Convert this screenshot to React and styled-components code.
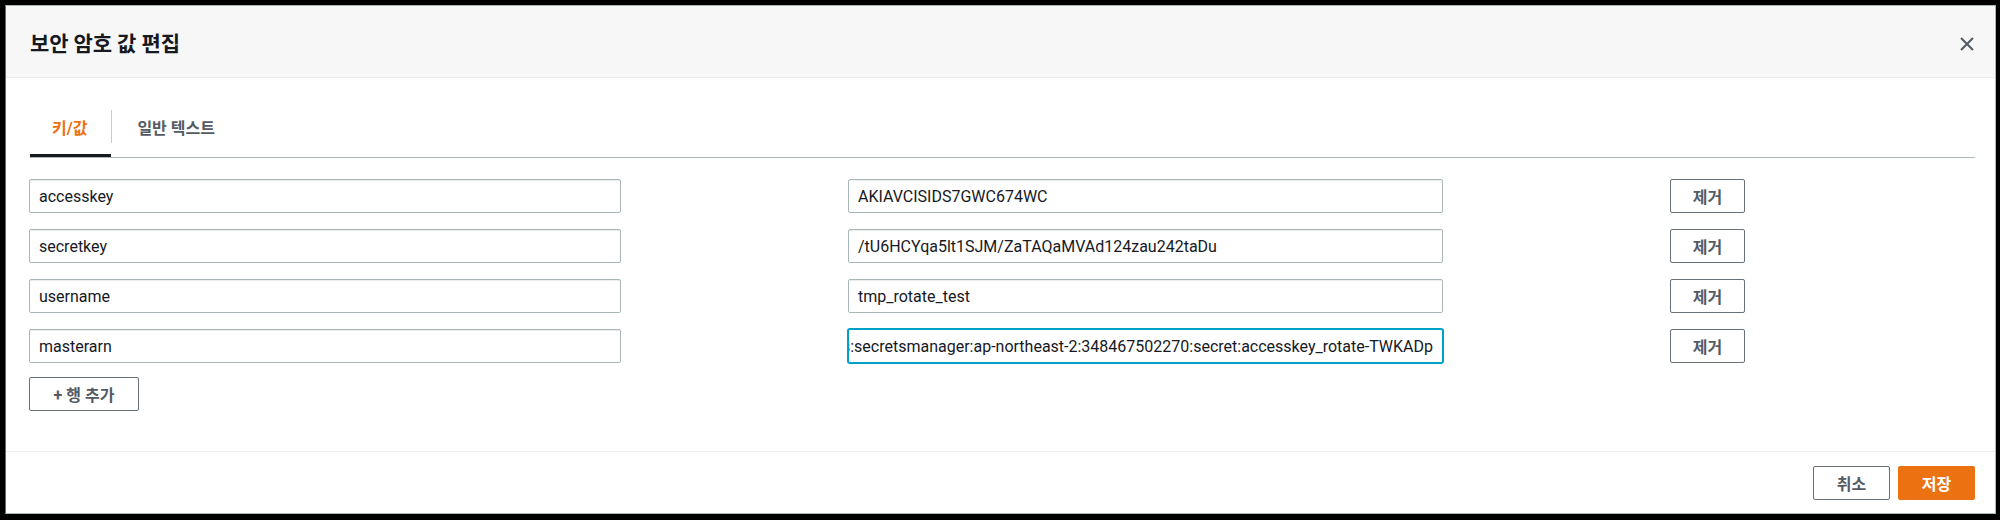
import React from "react";
import styled, { createGlobalStyle } from "styled-components";

const GlobalStyle = createGlobalStyle`
	html, body {
		margin: 0;
		padding: 0;
		background: #000;
	}
	body {
		font-family: Roboto, "Noto Sans CJK KR", sans-serif;
		color: #16191f;
	}
	* {
		box-sizing: border-box;
	}
`;

const rows = [
	{ key: "accesskey", value: "AKIAVCISIDS7GWC674WC" },
	{ key: "secretkey", value: "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" },
	{ key: "username", value: "tmp_rotate_test" },
	{
		key: "masterarn",
		value: "arn:aws:secretsmanager:ap-northeast-2:348467502270:secret:accesskey_rotate-TWKADp",
		focused: true,
	},
];

const CloseIcon = () => (
	<svg width="16" height="16" viewBox="0 0 16 16">
		<path d="M2 2 L14 14 M14 2 L2 14" stroke="#545b64" strokeWidth="2" fill="none" />
	</svg>
);

const App = () => {
	return (
		<Page>
			<GlobalStyle />
			<Modal>
				<Header>
					<Title>보안 암호 값 편집</Title>
					<CloseButton aria-label="닫기">
						<CloseIcon />
					</CloseButton>
				</Header>
				<Body>
					<TabList>
						<Tab active>키/값</Tab>
						<TabDivider />
						<Tab>일반 텍스트</Tab>
					</TabList>
					<Rows>
						{rows.map((row) => (
							<Row key={row.key}>
								<Field>
									<FieldText>{row.key}</FieldText>
								</Field>
								<Field focused={row.focused}>
									<FieldText>{row.value}</FieldText>
								</Field>
								<Button width="75px">제거</Button>
							</Row>
						))}
					</Rows>
					<AddRow>
						<Button width="110px">+ 행 추가</Button>
					</AddRow>
				</Body>
				<Footer>
					<Button width="77px">취소</Button>
					<Button width="77px" primary>
						저장
					</Button>
				</Footer>
			</Modal>
		</Page>
	);
};

export default App;

const Page = styled.div`
	height: 520px;
	padding: 5px 4px 6px 5px;
`;

const Modal = styled.div`
	height: 100%;
	display: flex;
	flex-direction: column;
	background: #fff;
	border: 1px solid #aab7b8;
	border-left-color: #5f6b6d;
`;

const Header = styled.div`
	height: 72px;
	flex: none;
	display: flex;
	align-items: center;
	justify-content: space-between;
	padding: 0 20px 0 24px;
	background: #f7f7f7;
	border-bottom: 1px solid #eaeded;
`;

const Title = styled.h2`
	margin: 0;
	font-size: 21px;
	font-weight: 700;
	color: #16191f;
	letter-spacing: -0.1px;
`;

const CloseButton = styled.button`
	border: none;
	background: none;
	padding: 0;
	width: 16px;
	height: 16px;
	display: flex;
	margin-top: 4px;
	cursor: pointer;
`;

const Body = styled.div`
	flex: 1;
	padding: 18px 20px 0 23px;
`;

const TabList = styled.div`
	display: flex;
	align-items: center;
	border-bottom: 1px solid #aab7b8;
	margin-left: 1px;
`;

const Tab = styled.div`
	height: 61px;
	display: flex;
	align-items: center;
	padding: 3px ${(p) => (p.active ? "24px 0 22px" : "0 0 25px")};
	font-size: 16px;
	font-weight: 700;
	color: ${(p) => (p.active ? "#ec7211" : "#545b64")};
	border-bottom: 3px solid ${(p) => (p.active ? "#16191f" : "transparent")};
`;

const TabDivider = styled.span`
	width: 1px;
	height: 33px;
	margin-top: -1px;
	background: #c6cbcc;
`;

const Rows = styled.div`
	display: flex;
	flex-direction: column;
	gap: 16px;
	margin-top: 21px;
`;

const Row = styled.div`
	display: grid;
	grid-template-columns: 592px 595px 75px;
	column-gap: 227px;
	align-items: center;
`;

const Field = styled.div`
	height: 34px;
	display: flex;
	align-items: center;
	justify-content: ${(p) => (p.focused ? "flex-end" : "flex-start")};
	overflow: hidden;
	padding: 0 9px;
	background: #fff;
	border: 1px solid ${(p) => (p.focused ? "#00a1c9" : "#aab7b8")};
	border-radius: 2px;
	box-shadow: ${(p) =>
		p.focused ? "0 0 0 1px #00a1c9" : "inset 0 1px 1px rgba(0, 0, 0, 0.08)"};
	font-size: 16px;
	color: #16191f;
`;

const FieldText = styled.span`
	white-space: nowrap;
	flex: none;
`;

const AddRow = styled.div`
	margin-top: 14px;
`;

const Button = styled.button`
	width: ${(p) => p.width};
	height: 34px;
	padding: 0;
	font-family: Roboto, "Noto Sans CJK KR", sans-serif;
	font-size: 16px;
	font-weight: 700;
	border-radius: 2px;
	cursor: pointer;
	color: ${(p) => (p.primary ? "#fff" : "#545b64")};
	background: ${(p) => (p.primary ? "#ec7211" : "#fff")};
	border: 1px solid ${(p) => (p.primary ? "#ec7211" : "#687078")};
`;

const Footer = styled.div`
	height: 62px;
	flex: none;
	display: flex;
	align-items: center;
	justify-content: flex-end;
	gap: 8px;
	padding: 0 20px;
	border-top: 1px solid #eaeded;
`;
